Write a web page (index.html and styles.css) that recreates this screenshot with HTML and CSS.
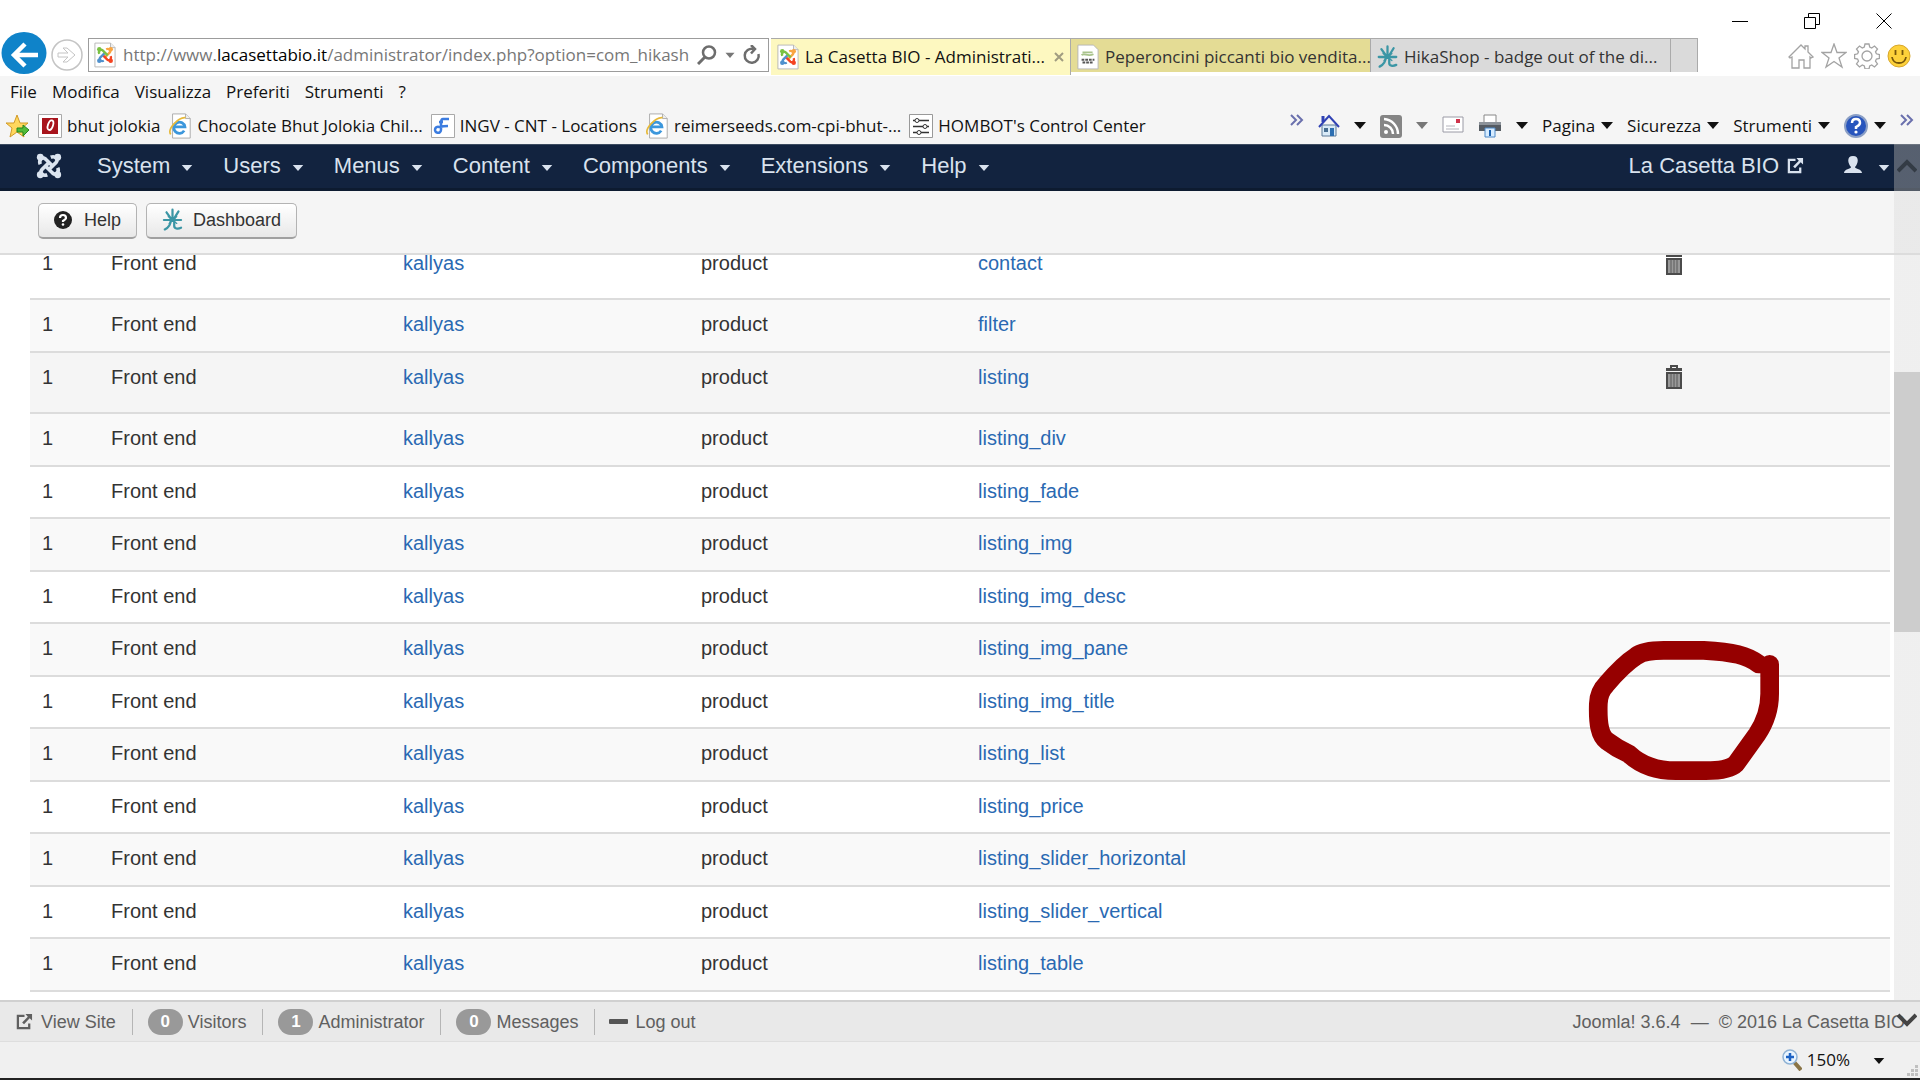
FILE: index.html
```html
<!DOCTYPE html>
<html lang="it">
<head>
<meta charset="utf-8">
<title>La Casetta BIO - Administration</title>
<link rel="stylesheet" href="styles.css">
</head>
<body>
<svg class="defs" aria-hidden="true">
  <defs>
    <g id="joomla-arm"><circle cx="4.5" cy="4.5" r="2.9" stroke="none"/><path d="M4.500 10.500C3 7 6 3.500 9 6L15.500 12.500" fill="none" stroke-width="3.100"/></g>
    <symbol id="joomla" viewBox="0 0 24 24">
      <g fill="#f9a541" stroke="#f9a541"><use href="#joomla-arm" transform="rotate(90 12 12)"/></g>
      <g fill="#f44321" stroke="#f44321"><use href="#joomla-arm" transform="rotate(180 12 12)"/></g>
      <g fill="#5091cd" stroke="#5091cd"><use href="#joomla-arm" transform="rotate(270 12 12)"/></g>
      <g fill="#7ac143" stroke="#7ac143"><use href="#joomla-arm"/></g>
    </symbol>
    <symbol id="page-joomla" viewBox="0 0 24 28">
      <path d="M1 1h17l5 5v21H1z" fill="#fff" stroke="#b5b5b5"/><path d="M18 1v5h5" fill="#eee" stroke="#b5b5b5"/>
      <use href="#joomla" x="2" y="4" width="20" height="20"/>
    </symbol>
    <symbol id="ie" viewBox="0 0 24 28">
      <path d="M4 1h14l5 5v21H4z" fill="#fff" stroke="#a9a9a9"/><path d="M18 1v5h5" fill="#eee" stroke="#a9a9a9"/>
      <path d="M16.500 19a6 6 0 1 1 .8-4H6" fill="none" stroke="#3c97dc" stroke-width="3"/>
      <path d="M2 23C-2 18 10 4 18 5" fill="none" stroke="#e6b93a" stroke-width="1.800"/>
    </symbol>
    <symbol id="hika" viewBox="0 0 24 28">
      <g fill="none" stroke="#3b96a5" stroke-width="2.600" stroke-linecap="round"><path d="M12 2v11M5 5l5 7M19 4l-5 8M2 14h20M10 14c0 6-3 9-7 11M14 14v7c0 3 4 4 8 2"/><path d="M7 10l10 8M17 10l-9 8" stroke-width="1.500"/></g>
    </symbol>
    <symbol id="caret" viewBox="0 0 12 8"><path d="M0 1h12L6 8z" fill="currentColor"/></symbol>
    <symbol id="chevrons" viewBox="0 0 14 12"><path d="M1 1l5 5-5 5M7 1l5 5-5 5" fill="none" stroke="#6a70ad" stroke-width="2"/></symbol>
    <symbol id="external" viewBox="0 0 18 18"><path d="M9 3H2v13h12v-5" fill="none" stroke="currentColor" stroke-width="2.400"/><path d="M10 1h7v7l-2.500-2.500L8.500 12 6.500 10l6-6z" fill="currentColor"/></symbol>
    <symbol id="trash" viewBox="0 0 16 24"><path d="M5 4V1h6v3" fill="none" stroke="#4b4b4b" stroke-width="2"/><path d="M0 3h16v3H0z" fill="#4b4b4b"/><path d="M1 8h14v15H1z" fill="#999" stroke="#4b4b4b" stroke-width="2"/><path d="M5 9v13M8 9v13M11 9v13" stroke="#5b5b5b"/></symbol>
  </defs>
</svg>

<header class="chrome">
  <div class="titlebar">
    <button class="win" aria-label="Minimize"><svg width="16" height="16"><path d="M0 8.500h16" stroke="#000"/></svg></button>
    <button class="win" aria-label="Restore"><svg width="16" height="16" fill="none" stroke="#000"><path d="M.5 4.500h11v11H.5zM4.500 4V.5h11v11H12"/></svg></button>
    <button class="win" aria-label="Close"><svg width="16" height="16"><path d="M.5.5l15 15M15.500.5l-15 15" stroke="#000"/></svg></button>
  </div>
  <div class="address-row">
    <div class="history">
      <button class="back" aria-label="Back"><svg width="46" height="42" viewBox="0 0 46 42"><ellipse cx="23" cy="21" rx="22.500" ry="21" fill="#0f83c9"/><path d="M37 23H14M24 12L13 23l11 11" fill="none" stroke="#fff" stroke-width="4.500"/></svg></button>
      <button aria-label="Forward"><svg width="32" height="32" viewBox="0 0 32 32" fill="none" stroke="#c4c4c4"><circle cx="16" cy="16" r="15" stroke-width="1.500"/><path d="M7 14h10l-5-5h4l8 7-8 7h-4l5-5H7z"/></svg></button>
    </div>
    <div class="address">
      <svg width="22" height="26"><use href="#page-joomla"/></svg>
      <div class="url" role="textbox" aria-label="Address" contenteditable="true" spellcheck="false">http://www.<span class="domain">lacasettabio.it</span>/administrator/index.php?option=com_hikash</div>
      <button aria-label="Search"><svg width="20" height="20" fill="none" stroke="#6d6d6d"><circle cx="12" cy="7.500" r="6" stroke-width="2.500"/><path d="M8 12l-7 7" stroke-width="3"/></svg></button>
      <button class="muted" aria-label="Show addresses"><svg width="10" height="6"><use href="#caret"/></svg></button>
      <button aria-label="Refresh"><svg width="18" height="20" fill="none" stroke="#6d6d6d" stroke-width="2.500"><path d="M15.500 9a7 7 0 1 1-5-5"/><path d="M8 0l4 4-4 4.500"/></svg></button>
    </div>
    <nav class="tabs">
      <a class="tab active" href="#"><svg width="22" height="26"><use href="#page-joomla"/></svg><span>La Casetta BIO - Administrati...</span><svg class="close" width="10" height="10"><path d="M1 1l8 8M9 1L1 9" stroke="#a09c80" stroke-width="2"/></svg></a>
      <a class="tab grouped" href="#"><svg width="22" height="26" viewBox="0 0 24 28"><path d="M1 1h17l5 5v21H1z" fill="#fff" stroke="#b5b5b5"/><path d="M6 9h11M5 12c3-3 6 2 13-1" fill="none" stroke="#a9c38c" stroke-width="2"/><path d="M5 17h14M6 20h12" stroke="#555" stroke-width="2" stroke-dasharray="3 1"/></svg><span>Peperoncini piccanti bio vendita...</span></a>
      <a class="tab" href="#"><svg width="21" height="26"><use href="#hika"/></svg><span>HikaShop - badge out of the di...</span></a>
      <button class="newtab" aria-label="New tab"></button>
    </nav>
    <div class="tools">
      <button aria-label="Home"><svg width="26" height="26" fill="none" stroke="#a3a3a3" stroke-width="1.300"><path d="M1 14L13 2l4 4V3h3v6l5 5-2 1-1-1v11h-6v-8h-5v8H4V14l-2 1z"/></svg></button>
      <button aria-label="Favorites"><svg width="26" height="26" fill="none" stroke="#a3a3a3" stroke-width="1.300"><path d="M13 1l3 8.500h9L18 15l3 9-8-5.500L5 24l3-9-7-5.500h9z"/></svg></button>
      <button aria-label="Tools"><svg width="26" height="26" viewBox="0 0 26 26" fill="none" stroke="#a3a3a3" stroke-width="1.300"><path d="M11 1h4l.7 3 2 1 2.800-2 3 3-2 2.800.9 2 3 .7v4l-3 .6-.9 2 2 2.900-3 3-2.800-2-2 .9-.7 3h-4l-.7-3-2-.9-2.800 2-3-3 2-2.900-.9-2-3-.6v-4l3-.7.9-2-2-2.800 3-3 2.800 2 2-1z"/><circle cx="13" cy="13" r="5"/></svg></button>
      <button aria-label="Feedback"><svg width="24" height="24"><circle cx="12" cy="12" r="11" fill="#fdd13a" stroke="#d8a72b"/><path d="M8.500 6v5M15.500 6v5M5 13c1 8 13 8 14 0" fill="none" stroke="#77570b" stroke-width="1.800"/></svg></button>
    </div>
  </div>
  <nav class="menubar">
    <button>File</button><button>Modifica</button><button>Visualizza</button><button>Preferiti</button><button>Strumenti</button><button>?</button>
  </nav>
  <div class="bars">
    <nav class="favorites">
      <button aria-label="Add to favorites"><svg width="24" height="25" viewBox="0 0 24 25"><path d="M11 1l3 8h8l-6 5 2 9-7-5-7 5 2-9-6-5h8z" fill="#ffd75e" stroke="#d19a28"/><path d="M11 14h6v-3l6 5-6 6v-4h-6z" fill="#52bb3a" stroke="#27871d"/></svg></button>
      <a href="#"><svg width="24" height="24"><path d="M.5.500h23v23H.5z" fill="#fff" stroke="#a9a9a9"/><path d="M4 4h16v16H4z" fill="#a8141c"/><ellipse cx="12.500" cy="11" rx="2.500" ry="5" transform="rotate(18 12 11)" fill="none" stroke="#fff" stroke-width="1.800"/></svg>bhut jolokia</a>
      <a href="#"><svg width="24" height="26"><use href="#ie"/></svg>Chocolate Bhut Jolokia Chil...</a>
      <a href="#"><svg width="24" height="24"><path d="M.5.500h23v23H.5z" fill="#fff" stroke="#a9a9a9"/><path d="M18 5h-6q-2 0-2 4v7a3 3 0 1 1-2-3q5-1 9-1M8 8h4" fill="none" stroke="#3b7ce0" stroke-width="2.500"/></svg>INGV - CNT - Locations</a>
      <a href="#"><svg width="24" height="26"><use href="#ie"/></svg>reimerseeds.com-cpi-bhut-...</a>
      <a href="#"><svg width="24" height="24" stroke="#333"><path d="M.5.500h23v23H.5z" fill="#fff" stroke="#999"/><path d="M4 6.500h16M4 12.500h16M4 18.500h16" stroke-width="1.500"/><g fill="#fff"><circle cx="8" cy="6.500" r="2"/><circle cx="16" cy="12.500" r="2"/><circle cx="10" cy="18.500" r="2"/></g></svg>HOMBOT's Control Center</a>
    </nav>
    <div class="commands">
      <button class="more" aria-label="More favorites"><svg width="14" height="12"><use href="#chevrons"/></svg></button>
      <button class="wide" aria-label="Home page"><svg width="22" height="24"><path d="M4 11h14v11H4z" fill="#d9eaf7" stroke="#5b7896"/><path d="M1 13L11 2l10 11" fill="none" stroke="#3042b4" stroke-width="2"/><path d="M5 2v6" stroke="#3042b4" stroke-width="3"/><path d="M12 14h4v8h-4z" fill="#2c6eb1"/><path d="M6 14h4v4H6z" fill="#476e91"/></svg><svg class="caret" width="12" height="8"><use href="#caret"/></svg></button>
      <button class="wide faded" aria-label="Feeds"><svg width="22" height="24"><rect width="22" height="23" y="1" rx="3" fill="#858585"/><g fill="none" stroke="#fff" stroke-width="2.500"><path d="M4 11a9 9 0 0 1 9 9M4 5a15 15 0 0 1 14 15"/></g><circle cx="6" cy="18" r="2" fill="#fff"/></svg><svg class="caret" width="12" height="8"><use href="#caret"/></svg></button>
      <button aria-label="Read mail"><svg width="22" height="24"><path d="M1 3h20v15H1z" fill="#fff" stroke="#9a9aa5"/><path d="M14 5h4v4h-4z" fill="#cf344c"/><path d="M4 12h9M4 15h13" stroke="#b4b4bc"/></svg></button>
      <button class="wide" aria-label="Print"><svg width="24" height="24"><path d="M6 1h12v8H6z" fill="#fff" stroke="#888"/><path d="M1 8h22v9H1z" fill="#555b62"/><path d="M1 8h22v3H1z" fill="#8c9299"/><path d="M7 14h10v9H7z" fill="#d7ecff" stroke="#4c88c6"/><path d="M12 16v6" stroke="#1c62b1" stroke-width="2"/></svg><svg class="caret" width="12" height="8"><use href="#caret"/></svg></button>
      <button>Pagina<svg class="caret" width="12" height="8"><use href="#caret"/></svg></button>
      <button>Sicurezza<svg class="caret" width="12" height="8"><use href="#caret"/></svg></button>
      <button>Strumenti<svg class="caret" width="12" height="8"><use href="#caret"/></svg></button>
      <button aria-label="Help"><svg width="24" height="24"><circle cx="12" cy="12" r="11" fill="#2855bd" stroke="#8b9fc5" stroke-width="2"/><path d="M8 9q0-4 4-4t4 4q0 2-4 4v2" fill="none" stroke="#fff" stroke-width="2.500"/><circle cx="12" cy="18" r="1.600" fill="#fff"/></svg><svg class="caret" width="12" height="8"><use href="#caret"/></svg></button>
      <button class="more" aria-label="More commands"><svg width="14" height="12"><use href="#chevrons"/></svg></button>
    </div>
  </div>
</header>

<div class="viewport">
  <nav class="navbar">
    <a class="brand" href="#" aria-label="Joomla"><svg width="28" height="28" viewBox="0 0 24 24" fill="#dbe4ef" stroke="#dbe4ef"><use href="#joomla-arm"/><use href="#joomla-arm" transform="rotate(90 12 12)"/><use href="#joomla-arm" transform="rotate(180 12 12)"/><use href="#joomla-arm" transform="rotate(270 12 12)"/></svg></a>
    <div class="menus">
      <a href="#">System<svg width="12" height="7"><use href="#caret"/></svg></a>
      <a href="#">Users<svg width="12" height="7"><use href="#caret"/></svg></a>
      <a href="#">Menus<svg width="12" height="7"><use href="#caret"/></svg></a>
      <a href="#">Content<svg width="12" height="7"><use href="#caret"/></svg></a>
      <a href="#">Components<svg width="12" height="7"><use href="#caret"/></svg></a>
      <a href="#">Extensions<svg width="12" height="7"><use href="#caret"/></svg></a>
      <a href="#">Help<svg width="12" height="7"><use href="#caret"/></svg></a>
    </div>
    <a class="site" href="#">La Casetta BIO<svg width="17" height="17" viewBox="0 0 18 18"><use href="#external"/></svg></a>
    <a class="user" href="#" aria-label="User menu"><svg class="person" width="18" height="18"><path d="M9 0c7 0 5 8 2 11 0 2 7 2 7 6H0c0-4 7-4 7-6C4 8 2 0 9 0z" fill="currentColor"/></svg><svg width="12" height="7"><use href="#caret"/></svg></a>
  </nav>
  <div class="subhead">
    <button class="btn"><svg width="18" height="18"><circle cx="9" cy="9" r="9" fill="#222"/><path d="M6 7q0-3 3-3t3 3q0 1-3 3v1" fill="none" stroke="#fff" stroke-width="2.200"/><circle cx="9" cy="13.500" r="1.300" fill="#fff"/></svg>Help</button>
    <button class="btn dash"><svg width="21" height="24"><use href="#hika"/></svg>Dashboard</button>
  </div>
  <main class="content">
    <table>
      <colgroup><col class="c-num"><col class="c-client"><col class="c-tpl"><col class="c-view"><col class="c-file"><col class="c-del"></colgroup>
      <tbody>
        <tr class="tall"><td>1</td><td>Front end</td><td><a href="#">kallyas</a></td><td>product</td><td><a href="#">contact</a></td><td><button aria-label="Delete"><svg width="16" height="24"><use href="#trash"/></svg></button></td></tr>
        <tr><td>1</td><td>Front end</td><td><a href="#">kallyas</a></td><td>product</td><td><a href="#">filter</a></td><td></td></tr>
        <tr class="tall hover"><td>1</td><td>Front end</td><td><a href="#">kallyas</a></td><td>product</td><td><a href="#">listing</a></td><td><button aria-label="Delete"><svg width="16" height="24"><use href="#trash"/></svg></button></td></tr>
        <tr><td>1</td><td>Front end</td><td><a href="#">kallyas</a></td><td>product</td><td><a href="#">listing_div</a></td><td></td></tr>
        <tr><td>1</td><td>Front end</td><td><a href="#">kallyas</a></td><td>product</td><td><a href="#">listing_fade</a></td><td></td></tr>
        <tr><td>1</td><td>Front end</td><td><a href="#">kallyas</a></td><td>product</td><td><a href="#">listing_img</a></td><td></td></tr>
        <tr><td>1</td><td>Front end</td><td><a href="#">kallyas</a></td><td>product</td><td><a href="#">listing_img_desc</a></td><td></td></tr>
        <tr><td>1</td><td>Front end</td><td><a href="#">kallyas</a></td><td>product</td><td><a href="#">listing_img_pane</a></td><td></td></tr>
        <tr><td>1</td><td>Front end</td><td><a href="#">kallyas</a></td><td>product</td><td><a href="#">listing_img_title</a></td><td></td></tr>
        <tr><td>1</td><td>Front end</td><td><a href="#">kallyas</a></td><td>product</td><td><a href="#">listing_list</a></td><td></td></tr>
        <tr><td>1</td><td>Front end</td><td><a href="#">kallyas</a></td><td>product</td><td><a href="#">listing_price</a></td><td></td></tr>
        <tr><td>1</td><td>Front end</td><td><a href="#">kallyas</a></td><td>product</td><td><a href="#">listing_slider_horizontal</a></td><td></td></tr>
        <tr><td>1</td><td>Front end</td><td><a href="#">kallyas</a></td><td>product</td><td><a href="#">listing_slider_vertical</a></td><td></td></tr>
        <tr><td>1</td><td>Front end</td><td><a href="#">kallyas</a></td><td>product</td><td><a href="#">listing_table</a></td><td></td></tr>
      </tbody>
    </table>
  </main>
  <footer class="status">
    <a href="#"><svg width="17" height="17" viewBox="0 0 18 18"><use href="#external"/></svg>View Site</a>
    <span class="stat"><span class="badge">0</span>Visitors</span>
    <span class="stat"><span class="badge">1</span>Administrator</span>
    <span class="stat"><span class="badge">0</span>Messages</span>
    <a class="stat logout" href="#"><svg width="19" height="5"><rect width="19" height="5" rx="1" fill="#555"/></svg>Log out</a>
    <span class="copyright">Joomla! 3.6.4 &nbsp;—&nbsp; © 2016 La Casetta BIO</span>
  </footer>
  <div class="scrollbar">
    <svg width="20" height="14" fill="none" stroke="#333b45" stroke-width="4"><path d="M1 12l9-9 9 9"/></svg>
    <div class="thumb"></div>
    <svg width="20" height="14" fill="none" stroke="#444" stroke-width="4"><path d="M1 2l9 9 9-9"/></svg>
  </div>
  <svg class="marker" width="197" height="147" viewBox="80 50 591 441" fill="none" stroke="#960000" stroke-width="56" stroke-linecap="round" stroke-linejoin="round"><path d="M595 131C560 105 520 95 430 90H310Q250 90 228 107C200 125 165 160 138 192Q115 215 114 250C112 310 118 345 140 362Q170 385 206 401Q260 452 350 451H430Q505 452 527 430L590 342Q628 285 628 220V132"/></svg>
</div>

<div class="zoombar">
  <button><svg width="20" height="22"><path d="M12 13l7 8" stroke="#8a7446" stroke-width="4"/><circle cx="8" cy="8" r="7" fill="#e8f4ff" stroke="#8fb2d4" stroke-width="1.500"/><path d="M8 4v8M4 8h8" stroke="#1c62c4" stroke-width="2.500"/></svg>150%<svg class="zcaret" width="12" height="7"><use href="#caret"/></svg></button>
  <svg class="grip" width="12" height="14"><path d="M9 1h3v3H9zM5 5h3v3H5zM9 5h3v3H9zM1 9h3v3H1zM5 9h3v3H5zM9 9h3v3H9z" fill="#c0c0c0"/></svg>
</div>
</body>
</html>
```
FILE: styles.css
```css
* { box-sizing: border-box; }
body {
  margin: 0;
  height: 100vh;
  display: flex;
  flex-direction: column;
  background: #fff;
  color: #333;
  font-family: "Liberation Sans", Arial, sans-serif;
  overflow: hidden;
}
.defs { position: absolute; width: 0; height: 0; }
svg { display: block; flex: none; }
a { color: inherit; text-decoration: none; }
button { margin: 0; padding: 0; border: 0; background: none; font: inherit; color: inherit; }

/* browser window */
.chrome { flex: none; background: #f5f5f5; color: #111; font: 17px/24px "Open Sans", "Noto Sans", sans-serif; white-space: nowrap; }
.titlebar { height: 38px; display: flex; justify-content: flex-end; gap: 56px; padding: 13px 28px 0 0; background: #fff; }
.win { height: 16px; }
.address-row { height: 38px; display: flex; align-items: flex-start; background: #fff; }
.history { flex: none; width: 88px; height: 34px; display: flex; align-items: center; gap: 4px; padding-left: 1px; }
.back { margin-top: -4px; }
.address { flex: 1 1 681px; min-width: 0; height: 34px; display: flex; align-items: center; border: 1px solid #9c9c9c; padding: 0 7px 0 5px; margin-right: 2px; }
.url { flex: 1; min-width: 0; overflow: hidden; padding-left: 7px; color: #777; }
.domain { color: #000; }
.address button { margin-left: 8px; }
.muted { color: #777; }
.tabs { flex: 1 1 927px; min-width: 0; display: flex; height: 34px; border-top: 1px solid #aaa; }
.tab { flex: 1 1 300px; min-width: 0; display: flex; align-items: center; gap: 6px; padding: 2px 6px 0; background: #dadada; color: #333; border-right: 1px solid #aaa; overflow: hidden; }
.tab.active { background: #fdf8c0; color: #111; height: 36px; padding-bottom: 2px; }
.tab.grouped { background: #e4dc95; }
.close { margin-left: auto; }
.newtab { flex: 0 1 27px; background: #dadada; border-right: 1px solid #aaa; }
.tools { flex: none; width: 222px; display: flex; justify-content: flex-end; align-items: center; gap: 7px; padding: 5px 9px 0 0; }
.menubar { display: flex; gap: 15px; padding: 4px 10px; height: 32px; }
.bars { height: 36px; display: flex; align-items: center; justify-content: space-between; padding: 1px 6px 1px; }
.favorites { display: flex; gap: 8px; align-items: center; }
.favorites a { display: flex; align-items: center; gap: 5px; }
.commands { display: flex; align-items: center; gap: 14px; }
.commands button { display: flex; align-items: center; gap: 6px; }
.commands .wide { gap: 14px; }
.commands .more { align-self: flex-start; }
.commands .caret { margin-top: -2px; }
.faded .caret { color: #777; }

/* page */
.viewport { flex: 1; min-height: 0; position: relative; display: flex; flex-direction: column; }
.navbar { flex: none; height: 47px; display: flex; align-items: center; padding: 0 30px 2px 35px; background: #12233f; border-top: 1px solid #3c4b60; border-bottom: 3px solid #0d1b30; color: #d9e2ee; font-size: 22px; line-height: 26px; white-space: nowrap; }
.menus { display: flex; gap: 30px; margin-left: 34px; }
.menus a { display: flex; align-items: center; gap: 11px; }
.menus svg, .user svg { margin-top: 4px; }
.site { display: flex; align-items: center; gap: 8px; margin-left: auto; }
.user { display: flex; align-items: center; gap: 16px; margin-left: 40px; }
.user .person { margin-top: -2px; }
.subhead { flex: none; height: 64px; display: flex; gap: 9px; align-items: flex-start; padding: 12px 38px; background: #f5f5f5; border-bottom: 2px solid #dcdcdc; }
.btn { height: 36px; display: flex; align-items: center; gap: 12px; padding: 0 15px 1px; border: 1px solid #b3b3b3; border-bottom: 2px solid #a0a0a0; border-radius: 5px; background: linear-gradient(#fff, #e8e8e8); font-size: 18px; line-height: 22px; color: #333; }
.btn.dash { gap: 10px; }
.content { flex: 1; min-height: 0; overflow: hidden; padding: 0 30px; }
table { width: 100%; margin-top: -16px; border-collapse: separate; border-spacing: 0; table-layout: fixed; font-size: 20px; line-height: 24px; }
.c-num { width: 69px; }
.c-client { width: 292px; }
.c-tpl { width: 298px; }
.c-view { width: 277px; }
.c-file { width: 688px; }
td { height: 52px; padding: 12px 12px 0; border-bottom: 2px solid #dcdcdc; vertical-align: top; }
tr:nth-child(even) td { height: 53px; background: #f9f9f9; }
.tall td { height: 61px; }
.hover td { background: #f5f5f5; }
td a { color: #2a69b2; }
td button { display: block; }
.status { flex: none; height: 42px; display: flex; align-items: center; padding: 0 0 0 16px; background: #e9e9e9; border-top: 2px solid #d0d0d0; border-bottom: 1px solid #dedede; color: #606060; font-size: 18px; line-height: 26px; white-space: nowrap; }
.status a { display: flex; align-items: center; gap: 8px; }
.stat { display: flex; align-items: center; gap: 5px; margin-left: 16px; padding-left: 15px; border-left: 1px solid #b5b5b5; }
.status .logout { padding-left: 14px; gap: 7px; }
.badge { width: 35px; height: 26px; border-radius: 13px; background: #999; color: #fff; text-align: center; font-weight: bold; font-size: 17px; }
.copyright { margin-left: auto; padding-right: 15px; }
.scrollbar { position: absolute; top: 0; right: 0; bottom: 0; width: 26px; display: flex; flex-direction: column; align-items: center; justify-content: space-between; padding: 15px 0; background: linear-gradient(rgba(170, 170, 170, .45) 47px, rgba(220, 220, 220, .45) 47px calc(100% - 42px), transparent calc(100% - 42px)); }
.thumb { width: 100%; height: 30%; margin-bottom: 182px; background: #cdcdcd; }
.marker { position: absolute; top: 493px; right: 136px; }

.zoombar { flex: none; height: 38px; display: flex; justify-content: flex-end; padding: 0 2px 0 0; background: #f0f0f0; border-bottom: 2px solid #222; color: #111; font: 17px/24px "Open Sans", "Noto Sans", sans-serif; }
.zoombar button { display: flex; align-items: center; gap: 5px; }
.zcaret { margin-left: 18px; }
.grip { align-self: flex-end; margin-left: 21px; }
```
